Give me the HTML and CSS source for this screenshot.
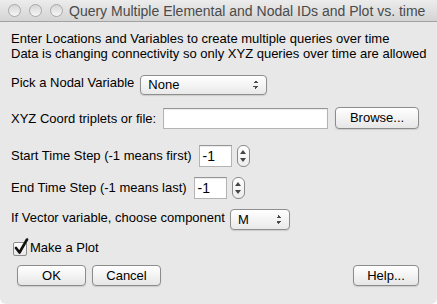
FILE: index.html
```html
<!DOCTYPE html>
<html lang="en">

<head>
    <meta charset="UTF-8">
    <title>Query Multiple Elemental and Nodal IDs and Plot vs. time</title>
    <link rel="stylesheet" href="styles.css">
</head>

<body>
    <div class="window">
        <div class="titlebar">
            <div class="lights">
                <span class="light"></span>
                <span class="light"></span>
                <span class="light"></span>
            </div>
            <div class="title">Query Multiple Elemental and Nodal IDs and Plot vs. time</div>
        </div>
        <div class="content">
            <div class="intro">
                <div>Enter Locations and Variables to create multiple queries over time</div>
                <div>Data is changing connectivity so only XYZ queries over time are allowed</div>
            </div>

            <div class="row row-pick">
                <label>Pick a Nodal Variable</label>
                <div class="popup popup-var">
                    <span>None</span>
                    <span class="arrows"></span>
                </div>
            </div>

            <div class="row row-xyz">
                <label>XYZ Coord triplets or file:</label>
                <div class="field field-xyz"></div>
                <button class="btn btn-browse">Browse...</button>
            </div>

            <div class="row row-start">
                <label>Start Time Step (-1 means first)</label>
                <div class="field field-step">-1</div>
                <div class="spinner"><span class="up"></span><span class="down"></span></div>
            </div>

            <div class="row row-end">
                <label>End Time Step (-1 means last)</label>
                <div class="field field-step">-1</div>
                <div class="spinner"><span class="up"></span><span class="down"></span></div>
            </div>

            <div class="row row-comp">
                <label>If Vector variable, choose component</label>
                <div class="popup popup-comp">
                    <span>M</span>
                    <span class="arrows"></span>
                </div>
            </div>

            <div class="row row-check">
                <span class="checkbox">
                    <svg width="16" height="18" viewBox="0 0 16 18">
                        <path d="M3 10 L6.5 14.5 L14 1.5" fill="none" stroke="#111" stroke-width="2.6" stroke-linecap="round" stroke-linejoin="round"/>
                    </svg>
                </span>
                <span>Make a Plot</span>
            </div>

            <div class="row row-buttons">
                <button class="btn">OK</button>
                <button class="btn">Cancel</button>
                <button class="btn btn-help">Help...</button>
            </div>
        </div>
    </div>
</body>

</html>
```

FILE: styles.css
```css
body {
    margin: 0;
    background: #ffffff;
    font-family: "Liberation Sans", Arial, sans-serif;
    font-size: 13px;
    line-height: 15px;
    color: #000;
}

.window {
    width: 437px;
    height: 304px;
    box-sizing: border-box;
    background: #e8e8e8;
    border-radius: 0 0 6px 6px;
    overflow: hidden;
}

.titlebar {
    height: 21px;
    display: flex;
    align-items: center;
    background: linear-gradient(#ececec, #d4d4d4);
    border-bottom: 1px solid #a2a2a2;
}

.lights {
    display: flex;
    gap: 8px;
    margin-left: 8px;
}

.light {
    width: 11px;
    height: 11px;
    border-radius: 50%;
    border: 1px solid #a8a8a8;
    background: linear-gradient(#d6d6d6, #f6f6f6);
}

.title {
    margin-left: 6px;
    padding-top: 1px;
    color: #4a4a4a;
    font-size: 14px;
    white-space: nowrap;
}

.content {
    padding: 9px 18px 0 11px;
}

.intro {
    white-space: nowrap;
}

.row {
    display: flex;
    align-items: center;
}

.row label {
    white-space: nowrap;
}

.row-pick {
    margin-top: 14px;
    height: 20px;
    gap: 6px;
}

.row-pick label,
.row-comp label {
    margin-bottom: 5px;
}

.row-xyz {
    margin-top: 12px;
    height: 22px;
    gap: 7px;
}

.row-start {
    margin-top: 15px;
    height: 23px;
}

.row-end {
    margin-top: 9px;
    height: 23px;
}

.row-start label,
.row-end label {
    margin-right: 7px;
}

.row-comp {
    margin-top: 10px;
    height: 21px;
    gap: 5px;
}

.row-check {
    margin-top: 10px;
    height: 15px;
    padding-left: 2px;
    gap: 3px;
}

.row-buttons {
    margin-top: 10px;
    padding-left: 6px;
    gap: 6px;
}

/* controls */

.popup {
    box-sizing: border-box;
    display: flex;
    align-items: center;
    justify-content: space-between;
    border: 1px solid #8e8e8e;
    border-radius: 4px;
    background: linear-gradient(#ffffff, #f4f4f4 50%, #e9e9e9);
    box-shadow: 0 1px 1px rgba(0, 0, 0, 0.12);
    padding: 0 8px 1px 7px;
}

.popup-var {
    width: 127px;
    height: 20px;
}

.popup-comp {
    width: 60px;
    height: 21px;
}

.arrows {
    width: 5px;
    height: 9px;
    background:
        linear-gradient(to bottom right, transparent 50%, #4a4a4a 50%) left top / 3px 3px no-repeat,
        linear-gradient(to bottom left, transparent 50%, #4a4a4a 50%) right top / 2px 3px no-repeat,
        linear-gradient(to top right, transparent 50%, #4a4a4a 50%) left bottom / 3px 3px no-repeat,
        linear-gradient(to top left, transparent 50%, #4a4a4a 50%) right bottom / 2px 3px no-repeat;
}

.field {
    box-sizing: border-box;
    background: #fff;
    border: 1px solid #b4b4b4;
    border-top-color: #959595;
    box-shadow: inset 0 1px 1px rgba(0, 0, 0, 0.08);
}

.field-xyz {
    width: 165px;
    height: 21px;
}

.field-step {
    width: 33px;
    height: 22px;
    line-height: 20px;
    padding-left: 3px;
    font-size: 14px;
}

.spinner {
    box-sizing: border-box;
    width: 13px;
    height: 22px;
    margin-left: 5px;
    border: 1px solid #8a8a8a;
    border-radius: 6px;
    background: linear-gradient(#ffffff, #ececec);
    display: flex;
    flex-direction: column;
    align-items: center;
    justify-content: space-between;
    padding: 4px 0;
}

.spinner .up,
.spinner .down {
    width: 0;
    height: 0;
    border-left: 3px solid transparent;
    border-right: 3px solid transparent;
}

.spinner .up {
    border-bottom: 4px solid #444;
}

.spinner .down {
    border-top: 4px solid #444;
}

.checkbox {
    box-sizing: border-box;
    width: 14px;
    height: 14px;
    margin-top: 3px;
    border: 1px solid #8c8c8c;
    border-radius: 2px;
    background: linear-gradient(#ffffff, #e8e8e8);
    position: relative;
}

.checkbox svg {
    position: absolute;
    left: -1px;
    top: -5px;
}

.btn {
    box-sizing: border-box;
    width: 69px;
    height: 21px;
    padding: 0 0 1px;
    border: 1px solid #8c8c8c;
    border-radius: 4px;
    background: linear-gradient(#ffffff, #f3f3f3 50%, #e6e6e6);
    box-shadow: 0 1px 1px rgba(0, 0, 0, 0.12);
    font-family: "Liberation Sans", Arial, sans-serif;
    font-size: 13px;
    color: #000;
}

.btn-browse {
    width: 84px;
    height: 22px;
}

.btn-help {
    width: 66px;
    margin-left: auto;
}
```
